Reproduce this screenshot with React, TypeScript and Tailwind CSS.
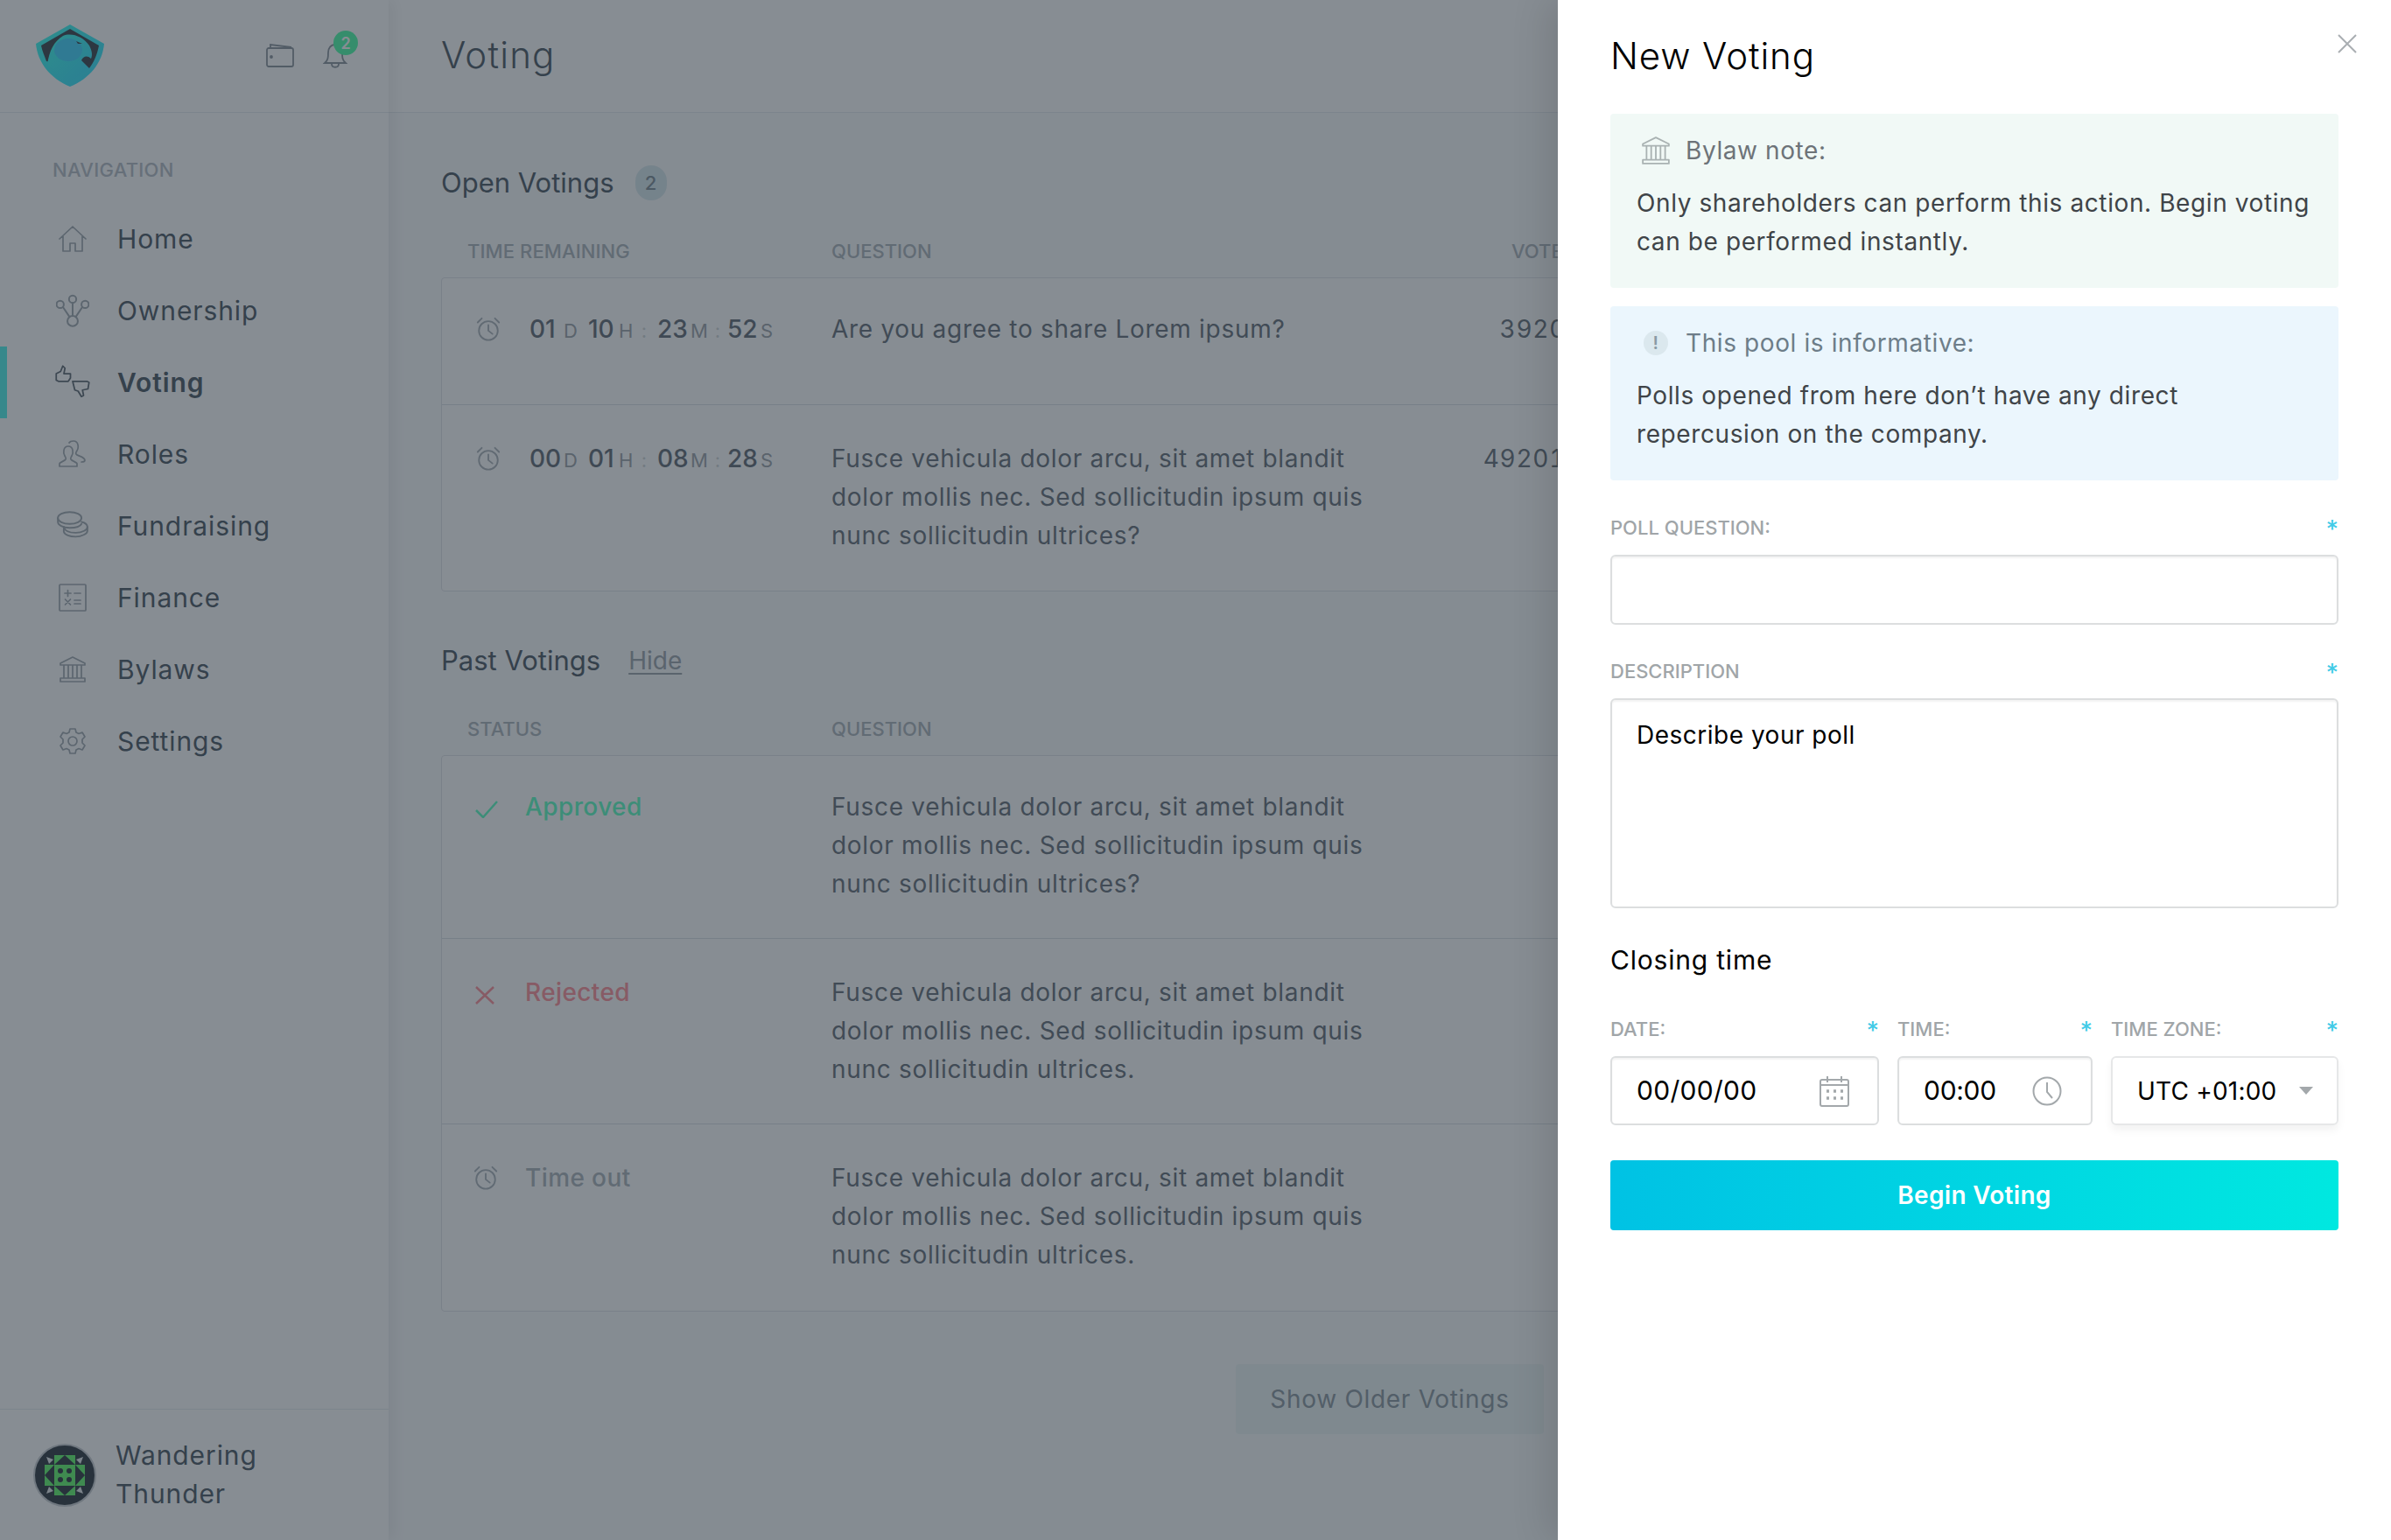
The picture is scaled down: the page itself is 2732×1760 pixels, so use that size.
import React from 'react';

const font = { fontFamily: 'Inter, "Noto Sans", sans-serif' };

function Icon({ className = '', size = 32, children }: { className?: string; size?: number; children: React.ReactNode }) {
  return (
    <svg width={size} height={size} viewBox="0 0 32 32" fill="none" stroke="currentColor" strokeWidth="1.700" strokeLinejoin="round" strokeLinecap="round" className={`shrink-0 ${className}`}>
      {children}
    </svg>
  );
}

const HomeIcon = () => (
  <Icon><path d="M1 16 16 2l15 14M5 13v17h8v-9h6v9h8V13" /></Icon>
);
const OwnershipIcon = () => (
  <Icon size={38}>
    <circle cx="16" cy="26" r="5" /><circle cx="16" cy="5" r="3.500" /><circle cx="4" cy="10" r="3.500" /><circle cx="28" cy="10" r="3.500" />
    <path d="M16 9v12M7 13l6 9M25 13l-6 9" />
  </Icon>
);
const VotingIcon = () => (
  <Icon size={40}>
    <path d="M1 8v6l2 1h9l2-3V8H8l1-5-2-2-2 5-4 2Z" strokeWidth="1.400" />
    <path d="M16 15h13l2 1-1 6-5 1 1 5-2 1-3-5-3-1-2-8Z" strokeWidth="1.400" />
  </Icon>
);
const RolesIcon = () => (
  <Icon>
    <path d="M1 30v-3c0-2 6-3 7-5 1-1 0-2-1-4-2-3-2-11 4-11s6 8 4 11c-1 2-2 3-1 4 1 2 7 3 7 5v3H1Z" />
    <path d="M12 3c1-2 3-2 5-2 6 0 6 8 4 11-1 2-2 3-1 4 1 2 10 3 10 7 0 2-2 2-4 2" />
  </Icon>
);
const CoinsIcon = () => (
  <Icon size={36}>
    <ellipse cx="13" cy="8" rx="12" ry="6" />
    <path d="M1 8v4c0 3 5 6 12 6s11-2 12-4" />
    <path d="M25 12c4 1 6 3 6 5 0 3-5 6-12 6-6 0-11-2-12-6" />
    <path d="M7 17v5c1 3 6 5 12 5s12-3 12-6v-4" />
  </Icon>
);
const FinanceIcon = () => (
  <Icon>
    <rect x="1" y="1" width="30" height="30" rx="1" />
    <path d="M7 11h7M10.500 7.500v7M18 11h7M7.500 18l6 6M13.500 18l-6 6M18 19h7M18 23h7" />
  </Icon>
);
const BankIcon = ({ size = 32 }: { size?: number }) => (
  <Icon size={size}>
    <path d="M2 9 16 2l14 7v2H2V9ZM6 11v15M11 11v15M16 11v15M21 11v15M26 11v15M2 26h28v4H2z" />
  </Icon>
);
const GearIcon = () => (
  <Icon>
    <circle cx="16" cy="16" r="5" />
    <path d="M13 2h6l1 4 3 1.500 4-1.500 3 5-3 3v4l3 3-3 5-4-1.500-3 1.500-1 4h-6l-1-4-3-1.500-4 1.500-3-5 3-3v-4l-3-3 3-5 4 1.500 3-1.500 1-4Z" />
  </Icon>
);
const AlarmIcon = ({ className = '' }: { className?: string }) => (
  <Icon size={30} className={className}>
    <circle cx="16" cy="18" r="11.500" strokeWidth="2" /><path d="M16 11v7l5 4M3 8l5-5M29 8l-5-5" strokeWidth="2" />
  </Icon>
);

const Label = ({ children }: { children: React.ReactNode }) => (
  <div className="flex justify-between text-[22px] leading-[30px] font-medium text-[#a0a5a8]">
    <span>{children}</span>
    <span className="text-[#43cbe7] text-[28px] leading-[22px] mt-[6px]">*</span>
  </div>
);

const nav = [
  { name: 'Home', icon: <HomeIcon /> },
  { name: 'Ownership', icon: <OwnershipIcon /> },
  { name: 'Voting', icon: <VotingIcon />, active: true },
  { name: 'Roles', icon: <RolesIcon /> },
  { name: 'Fundraising', icon: <CoinsIcon /> },
  { name: 'Finance', icon: <FinanceIcon /> },
  { name: 'Bylaws', icon: <BankIcon /> },
  { name: 'Settings', icon: <GearIcon /> },
];

const fusce = 'Fusce vehicula dolor arcu, sit amet blandit dolor mollis nec. Sed sollicitudin ipsum quis nunc sollicitudin ultrices';

function Time({ d, h, m, s }: { d: string; h: string; m: string; s: string }) {
  const unit = 'text-[22px] text-[#a5aab0] font-normal';
  const sep = 'text-[22px] text-[#d5d8da] font-normal text-center';
  return (
    <div className="flex items-baseline text-[28px] font-medium text-[#6f7781] whitespace-nowrap">
      <span className="w-[39px]">{d}</span><span className={`${unit} w-[28px]`}>D</span>
      <span className="w-[35px]">{h}</span><span className={`${unit} w-[14px]`}>H</span>
      <span className={`${sep} w-[30px]`}>:</span>
      <span className="w-[38px]">{m}</span><span className={`${unit} w-[20px]`}>M</span>
      <span className={`${sep} w-[22px]`}>:</span>
      <span className="w-[38px]">{s}</span><span className={unit}>S</span>
    </div>
  );
}

function Row({ left, text, value, first, last, height }: { left: React.ReactNode; text: React.ReactNode; value?: string; first?: boolean; last?: boolean; height: string }) {
  const top = first ? 'pt-[36px]' : 'pt-[39px]';
  return (
    <div className={`flex ${height} ${top} ${last ? '' : 'border-b border-[#dfe3e8]'}`}>
      <div className="w-[445px] shrink-0 pl-[38px]">{left}</div>
      <div className="w-[625px] shrink-0 text-[28px] leading-[44px] tracking-[0.7px] text-[#737b84]">{text}</div>
      {value && <div className="w-[214px] text-right text-[28px] leading-[44px] tracking-[0.7px] tabular-nums text-[#737b84]">{value}</div>}
    </div>
  );
}

function Status({ icon, label, color }: { icon: React.ReactNode; label: string; color: string }) {
  return (
    <div className="flex items-center h-[44px]">
      <span className={`w-[57px] flex ${color}`}>{icon}</span>
      <span className={`text-[28px] font-medium tracking-[0.4px] ${color}`}>{label}</span>
    </div>
  );
}

export default function App() {
  return (
    <div style={font} className="relative w-[2732px] h-[1760px] overflow-hidden bg-[#fbfcfd] flex">
      {/* sidebar */}
      <aside className="w-[444px] shrink-0 h-full bg-white flex flex-col shadow-[6px_0_16px_rgba(0,0,0,0.06)] z-10">
        <div className="h-[129px] border-b border-[#e8ecf0] flex items-center justify-between pl-[40px] pr-[47px]">
          <svg width="80" height="72" viewBox="0 0 80 72">
            <defs>
              <linearGradient id="sh" x1="0" y1="0" x2="1" y2="1">
                <stop offset="0" stopColor="#4bfff0" /><stop offset="1" stopColor="#48e0ff" />
              </linearGradient>
            </defs>
            <path d="M40 0 79 22C77 44 62 62 40 71 18 62 3 44 1 22Z" fill="url(#sh)" />
            <path d="M40 5 73 24C71 34 68 42 62 50L13 42C11 36 8 30 7 24Z" fill="#4b535b" />
            <path d="M14 46C16 30 22 19 32 13 42 9 55 14 62 24 65 30 66 35 64 39 60 35 55 36 53 41L62 50 40 66Z" fill="url(#sh)" />
            <ellipse cx="38" cy="29" rx="16" ry="13" fill="#50d8ff" />
            <path d="M47 19l7 3-5 0z" fill="#4b535b" />
          </svg>
          <div className="flex items-center gap-[33px] text-[#949da5]">
            <svg width="32" height="28" viewBox="0 0 32 28" fill="none" stroke="currentColor" strokeWidth="1.800" className="-mt-[2px]">
              <rect x="1" y="6" width="30" height="21" rx="2" /><path d="M5 6V2l24 3" /><circle cx="6" cy="16" r="1" fill="currentColor" />
            </svg>
            <div className="relative -mt-[2px]">
              <svg width="28" height="32" viewBox="0 0 28 32" fill="none" stroke="currentColor" strokeWidth="1.800">
                <path d="M2 25c4-3 4-7 4-12 0-5 3-9 8-9s8 4 8 9c0 5 0 9 4 12H2ZM10 26c0 5 8 5 8 0" />
              </svg>
              <span className="absolute -top-[12px] left-[12px] w-[28px] h-[28px] rounded-full bg-[#5dffb0] text-white text-[18px] font-semibold flex items-center justify-center">2</span>
            </div>
          </div>
        </div>
        <div className="pt-[50px] pl-[60px] text-[22px] leading-[30px] font-medium text-[#bcc3ca] tracking-[0.3px]">NAVIGATION</div>
        <nav className="mt-[23px] flex flex-col">
          {nav.map((item) => (
            <div key={item.name} className={`h-[82px] flex items-center ${item.active ? 'border-l-[8px] border-[#5ff5ee] pl-[53px]' : 'pl-[61px]'}`}>
              <span className={`w-[44px] mr-[29px] flex justify-center ${item.active ? 'text-[#6b747d]' : 'text-[#a9b0b7]'}`}>{item.icon}</span>
              <span className={`text-[30px] tracking-[0.9px] text-[#5b6670] ${item.active ? 'font-semibold' : ''}`}>{item.name}</span>
            </div>
          ))}
        </nav>
        <div className="mt-auto h-[150px] border-t border-[#e8ecf0] flex items-center pl-[38px]">
          <div className="w-[72px] h-[72px] rounded-full bg-[#414951] border-[2px] border-[#cfd3d7] flex items-center justify-center">
            <svg width="50" height="50" viewBox="0 0 50 50">
              <path d="M4 4l8 3-5 5zM46 4l-3 8-5-5zM4 46l3-8 5 5zM46 46l-8-3 5-5z" fill="#e8ecee" />
              <path d="M13 2h24v11h11v24H37v11H13V37H2V13h11z" fill="#6ff979" />
              <path d="M25 2 37 13H13zM25 48 13 37h24zM2 25l11-12v24zM48 25 37 13v24z" fill="#414951" />
              <rect x="15" y="15" width="20" height="20" fill="#6ff979" />
              <circle cx="20" cy="20" r="3" fill="#414951" /><circle cx="30" cy="20" r="3" fill="#414951" /><circle cx="20" cy="30" r="3" fill="#414951" /><circle cx="30" cy="30" r="3" fill="#414951" />
            </svg>
          </div>
          <div className="ml-[22px] -mt-[1px] text-[30px] leading-[44px] tracking-[0.9px] text-[#5b6670]">Wandering<br />Thunder</div>
        </div>
      </aside>

      {/* main */}
      <main className="flex-1 min-w-0 h-full flex flex-col">
        <div className="h-[129px] shrink-0 border-b border-[#e8ecf0] bg-white pl-[60px] pb-[3px] flex items-center">
          <h1 className="text-[42px] font-light tracking-[1.2px] text-[#5b6670]">Voting</h1>
        </div>
        <div className="pl-[60px]">
          <div className="w-[1700px]">
            <div className="flex items-center h-[44px] mt-[58px]">
              <span className="text-[31px] text-[#5b6670]">Open Votings</span>
              <span className="ml-[24px] w-[36px] h-[40px] rounded-full bg-[#dbeaee] text-[#89969f] text-[22px] font-medium flex items-center justify-center">2</span>
            </div>
            <div className="flex mt-[39px] h-[47px] text-[22px] leading-[30px] font-medium text-[#b3bac1] pt-[2px]">
              <span className="w-[446px] pl-[30px] tracking-[0.1px]">TIME REMAINING</span>
              <span className="w-[777px]">QUESTION</span>
              <span>VOTES</span>
            </div>
            <div className="border border-[#e2e6ea] rounded-[4px] bg-white">
              <Row first height="h-[145px]" value="3920" left={<div className="flex items-center h-[44px]"><AlarmIcon className="text-[#b3b9bf] mr-[32px]" /><Time d="01" h="10" m="23" s="52" /></div>} text="Are you agree to share Lorem ipsum?" />
              <Row last height="h-[212px]" value="49201" left={<div className="flex items-center h-[44px]"><AlarmIcon className="text-[#b3b9bf] mr-[32px]" /><Time d="00" h="01" m="08" s="28" /></div>} text={`${fusce}?`} />
            </div>
            <div className="flex items-center h-[44px] mt-[57px]">
              <span className="text-[31px] text-[#5b6670]">Past Votings</span>
              <span className="ml-[32px] text-[28px] text-[#a5acb3] underline underline-offset-4">Hide</span>
            </div>
            <div className="flex mt-[39px] h-[47px] text-[22px] leading-[30px] font-medium text-[#b3bac1] pt-[2px]">
              <span className="w-[446px] pl-[30px]">STATUS</span>
              <span>QUESTION</span>
            </div>
            <div className="border border-[#e2e6ea] rounded-[4px] bg-white">
              <Row first height="h-[209px]" left={<Status color="text-[#6affc8]" label="Approved" icon={<svg width="26" height="20" viewBox="0 0 26 20" fill="none" stroke="currentColor" strokeWidth="2.500" className="mt-[6px]"><path d="M1 11l8 8L25 1" /></svg>} />} text={`${fusce}?`} />
              <Row height="h-[212px]" left={<Status color="text-[#ff9aa2]" label="Rejected" icon={<svg width="22" height="21" viewBox="0 0 22 21" fill="none" stroke="currentColor" strokeWidth="2.500" className="mt-[6px]"><path d="M1 1l20 19M21 1 1 20" /></svg>} />} text={`${fusce}.`} />
              <Row last height="h-[213px]" left={<Status color="text-[#b3bac1]" label="Time out" icon={<AlarmIcon className="-ml-[3px]" />} />} text={`${fusce}.`} />
            </div>
            <div className="flex mt-[60px] ml-[908px]">
              <button className="w-[352px] h-[80px] rounded-[4px] bg-[#eff6f6] text-[#95a0a8] text-[28px] tracking-[0.7px]">Show Older Votings</button>
            </div>
          </div>
        </div>
      </main>

      {/* dim overlay */}
      <div className="absolute inset-0 z-20 bg-[#0f1b27]/50" />

      {/* side panel */}
      <section className="absolute top-0 right-0 bottom-0 z-30 w-[952px] bg-white shadow-[-12px_0_40px_rgba(0,0,0,0.12)] pl-[60px] pr-[60px] flex flex-col">
        <button className="absolute top-[39px] right-[39px] text-[#a9aeb2]">
          <svg width="22" height="22" viewBox="0 0 22 22" fill="none" stroke="currentColor" strokeWidth="2"><path d="M1 1l20 20M21 1 1 21" /></svg>
        </button>
        <h2 className="h-[130px] pb-[4px] flex items-center text-[42px] font-light tracking-[0.9px] text-black shrink-0">New Voting</h2>

        <div className="h-[199px] rounded-[4px] bg-[#f1f9f6] pl-[30px] pr-[20px] pt-[20px]">
          <div className="flex items-center text-[28px] leading-[44px] tracking-[0.6px] text-[#6d7378]">
            <span className="w-[34px] ml-[5px] mr-[17px] text-[#a9b2b2] flex"><BankIcon size={34} /></span>
            Bylaw note:
          </div>
          <p className="mt-[16px] text-[28px] leading-[44px] tracking-[0.6px] text-[#3f4448]">Only shareholders can perform this action. Begin voting can be performed instantly.</p>
        </div>

        <div className="mt-[21px] h-[199px] rounded-[4px] bg-[#ebf6fd] pl-[30px] pr-[20px] pt-[20px]">
          <div className="flex items-center text-[28px] leading-[44px] tracking-[0.6px] text-[#6d7d88]">
            <span className="w-[28px] h-[28px] ml-[8px] mr-[20px] rounded-full bg-[#dbe8ee] text-[#8a9aa4] text-[20px] font-semibold flex items-center justify-center">!</span>
            This pool is informative:
          </div>
          <p className="mt-[16px] text-[28px] leading-[44px] tracking-[0.6px] text-[#3f4448]">Polls opened from here don’t have any direct repercusion on the company.</p>
        </div>

        <div className="mt-[39px]"><Label>POLL QUESTION:</Label></div>
        <input className="mt-[16px] h-[80px] w-full rounded-[6px] border-[2px] border-[#dcdedf] bg-white shrink-0 shadow-[inset_0_2px_2px_rgba(0,0,0,0.05)]" />

        <div className="mt-[38px]"><Label>DESCRIPTION</Label></div>
        <div className="mt-[16px] h-[240px] rounded-[6px] border-[2px] border-[#dcdedf] px-[28px] pt-[18px] text-[28px] leading-[44px] tracking-[0.5px] text-black shadow-[inset_0_2px_2px_rgba(0,0,0,0.05)]">Describe your poll</div>

        <h3 className="mt-[37px] text-[30px] leading-[44px] tracking-[0.8px] text-black">Closing time</h3>

        <div className="mt-[42px] flex gap-[21px]">
          <div className="w-[307px]">
            <Label>DATE:</Label>
            <div className="mt-[16px] h-[79px] rounded-[6px] border-[2px] border-[#dcdedf] pl-[28px] pr-[32px] flex items-center justify-between text-[30px] tracking-[0.3px] text-black shadow-[inset_0_2px_2px_rgba(0,0,0,0.05)]">
              00/00/00
              <svg width="34" height="36" viewBox="0 0 34 36" fill="none" stroke="#a3a8ab" strokeWidth="2"><rect x="1" y="5" width="32" height="30" rx="2" /><path d="M1 11h32M9 1v7M25 1v7" /><path d="M8 18h3M16 18h3M24 18h3M8 26h3M16 26h3M24 26h3" strokeWidth="3.500" /></svg>
            </div>
          </div>
          <div className="w-[223px]">
            <Label>TIME:</Label>
            <div className="mt-[16px] h-[79px] rounded-[6px] border-[2px] border-[#dcdedf] pl-[28px] pr-[33px] flex items-center justify-between text-[30px] tracking-[-0.3px] text-black shadow-[inset_0_2px_2px_rgba(0,0,0,0.05)]">
              00:00
              <svg width="34" height="34" viewBox="0 0 34 34" fill="none" stroke="#a3a8ab" strokeWidth="2"><circle cx="17" cy="17" r="15.500" /><path d="M17 7v11l6 7" /></svg>
            </div>
          </div>
          <div className="flex-1">
            <Label>TIME ZONE:</Label>
            <div className="mt-[16px] h-[79px] rounded-[6px] border-[2px] border-[#e6e7e8] shadow-[0_6px_10px_rgba(0,0,0,0.05)] pl-[28px] pr-[27px] flex items-center justify-between text-[28px] tracking-[0.2px] text-black">
              UTC +01:00
              <span className="w-0 h-0 border-x-[8px] border-x-transparent border-t-[9px] border-t-[#a3a8ab]" />
            </div>
          </div>
        </div>

        <button className="mt-[40px] h-[80px] shrink-0 rounded-[4px] bg-gradient-to-r from-[#00c2e4] to-[#00e8e0] text-white text-[28px] font-semibold tracking-[0.3px]">Begin Voting</button>
      </section>
    </div>
  );
}
